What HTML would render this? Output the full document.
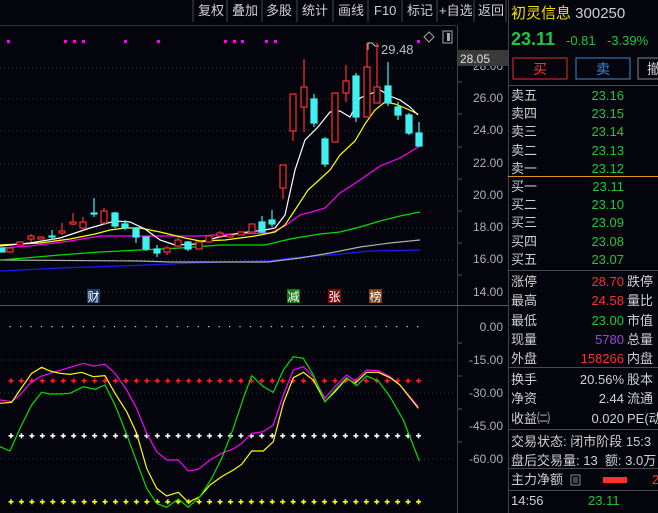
<!DOCTYPE html>
<html><head><meta charset="utf-8"><style>
*{margin:0;padding:0;box-sizing:border-box}
body{width:658px;height:513px;background:#04040c;overflow:hidden;position:relative;font-family:"Liberation Sans","Noto Sans CJK SC",sans-serif;color:#c8c8c8}
.t{position:absolute;font-size:13px;line-height:16px;white-space:nowrap}
.g{color:#1ec83c}.r{color:#ff3030}.y{color:#f0e000}.w{color:#d0d0d0}
.rt{text-align:right}
.hl{position:absolute;left:508px;width:150px;height:1px;background:#4a4a4a}
</style></head><body>
<svg width="658" height="513" style="position:absolute;left:0;top:0">
<defs>
<pattern id="pr" x="7.5" y="0" width="10.45" height="513" patternUnits="userSpaceOnUse"><rect x="1" y="380" width="5" height="1.6" fill="#ff2020"/><rect x="2.7" y="378.3" width="1.6" height="5" fill="#ff2020"/></pattern>
<pattern id="pw" x="7.5" y="0" width="10.45" height="513" patternUnits="userSpaceOnUse"><rect x="1" y="435" width="5" height="1.6" fill="#ffffff"/><rect x="2.7" y="433.3" width="1.6" height="5" fill="#ffffff"/></pattern>
<pattern id="py" x="7.5" y="0" width="10.45" height="513" patternUnits="userSpaceOnUse"><rect x="1" y="501" width="5" height="1.6" fill="#ffff00"/><rect x="2.7" y="499.3" width="1.6" height="5" fill="#ffff00"/></pattern>
<pattern id="pd" x="9.5" y="0" width="10.45" height="513" patternUnits="userSpaceOnUse"><rect x="0" y="326" width="1.2" height="1.2" fill="#e0e0e0"/></pattern>
</defs>
<!-- toolbar -->
<g stroke="#4a4a4a"><line x1="193" y1="0" x2="193" y2="22"/><line x1="227" y1="0" x2="227" y2="22"/><line x1="262" y1="0" x2="262" y2="22"/><line x1="297" y1="0" x2="297" y2="22"/><line x1="333" y1="0" x2="333" y2="22"/><line x1="368" y1="0" x2="368" y2="22"/><line x1="402" y1="0" x2="402" y2="22"/><line x1="437" y1="0" x2="437" y2="22"/><line x1="474" y1="0" x2="474" y2="22"/><line x1="506" y1="0" x2="506" y2="22"/></g>
<line x1="0" y1="25.5" x2="457" y2="25.5" stroke="#333"/>
<g font-size="13" fill="#d0d0d0" font-family="Liberation Sans,Noto Sans CJK SC,sans-serif">
<text x="198" y="15">复权</text><text x="232" y="15">叠加</text><text x="266" y="15">多股</text><text x="302" y="15">统计</text><text x="338" y="15">画线</text><text x="374" y="15">F10</text><text x="407" y="15">标记</text><text x="439" y="15">+自选</text><text x="478" y="15">返回</text>
</g>
<line x1="457.5" y1="26" x2="457.5" y2="513" stroke="#444"/>
<line x1="508.5" y1="0" x2="508.5" y2="513" stroke="#444"/>
<line x1="0" y1="305.5" x2="508" y2="305.5" stroke="#555"/>
<g stroke="#3a3a3a" stroke-dasharray="1,3">
<line x1="0" y1="68" x2="455" y2="68"/><line x1="0" y1="99" x2="455" y2="99"/><line x1="0" y1="131" x2="455" y2="131"/><line x1="0" y1="164" x2="455" y2="164"/><line x1="0" y1="196" x2="455" y2="196"/><line x1="0" y1="228" x2="455" y2="228"/><line x1="0" y1="260" x2="455" y2="260"/><line x1="0" y1="292" x2="455" y2="292"/>
<line x1="0" y1="360" x2="455" y2="360"/><line x1="0" y1="393" x2="455" y2="393"/><line x1="0" y1="459" x2="455" y2="459"/>
</g>
<g stroke="#555"><line x1="458" y1="82" x2="462" y2="82"/><line x1="458" y1="114" x2="462" y2="114"/><line x1="458" y1="147" x2="462" y2="147"/><line x1="458" y1="179" x2="462" y2="179"/><line x1="458" y1="211" x2="462" y2="211"/><line x1="458" y1="243" x2="462" y2="243"/><line x1="458" y1="275" x2="462" y2="275"/><line x1="458" y1="343" x2="462" y2="343"/><line x1="458" y1="376" x2="462" y2="376"/><line x1="458" y1="409" x2="462" y2="409"/><line x1="458" y1="442" x2="462" y2="442"/></g>
<g font-size="12" fill="#b0b0b0" text-anchor="end" font-family="Liberation Sans,sans-serif">
<text x="503" y="70">28.00</text>
<text x="503" y="102">26.00</text><text x="503" y="134">24.00</text><text x="503" y="167">22.00</text><text x="503" y="199">20.00</text><text x="503" y="231">18.00</text><text x="503" y="263">16.00</text><text x="503" y="296">14.00</text>
<text x="503" y="331">0.00</text><text x="503" y="364">-15.00</text><text x="503" y="397">-30.00</text><text x="503" y="430">-45.00</text><text x="503" y="463">-60.00</text>
</g>
<rect x="458" y="50" width="50" height="16" fill="#3a3a3a"/>
<text x="460" y="63" font-size="12" fill="#e0e0e0" font-family="Liberation Sans,sans-serif">28.05</text>
<rect x="443" y="31" width="9" height="12" fill="none" stroke="#aaa"/><rect x="447" y="33" width="3" height="8" fill="#aaa"/>
<path d="M424 37 L429 32 L434 37 L429 42Z" fill="none" stroke="#aaa"/>
<g fill="#ff00ff"><rect x="7" y="40" width="3" height="3"/><rect x="64" y="40" width="3" height="3"/><rect x="73" y="40" width="3" height="3"/><rect x="82" y="40" width="3" height="3"/><rect x="124" y="40" width="3" height="3"/><rect x="157" y="40" width="3" height="3"/><rect x="224" y="40" width="3" height="3"/><rect x="233" y="40" width="3" height="3"/><rect x="241" y="40" width="3" height="3"/><rect x="265" y="40" width="3" height="3"/><rect x="274" y="40" width="3" height="3"/><rect x="417" y="40" width="3" height="3"/></g>
<path d="M368 50 V43 h4 l3 3 h4" fill="none" stroke="#ccc"/>
<text x="381" y="54" font-size="13" fill="#c0c0c0" font-family="Liberation Sans,sans-serif">29.48</text>
<g fill="none" stroke-width="1.2">
<polyline stroke="#1a1aff" points="0,271 60,268 120,266 170,264 220,262 268,261 290,258 330,255 370,251 420,250"/>
<polyline stroke="#b0b0b0" points="0,260 140,261 170,262 240,262 268,262 300,258 330,253 360,247 390,243 420,240"/>
<polyline stroke="#00e000" points="0,260 25,258 60,255 100,252 140,250 180,248 220,245 265,245 290,239 320,234 340,232 360,227 380,221 400,216 420,212"/>
<polyline stroke="#ff00ff" points="0,248 30,246 70,241 100,236 160,236 200,236 230,234 270,233 285,226 300,215 315,211 325,208 340,193 360,180 380,166 400,158 420,146"/>
<polyline stroke="#ffff00" points="0,245 40,243 70,239 95,234 110,230 125,228 140,228 160,232 185,238 200,241 225,240 255,236 275,232 285,225 295,210 308,190 318,181 330,170 340,155 355,141 365,124 375,110 385,102 395,104 405,108 418,114"/>
<polyline stroke="#ffffff" points="0,246 30,243 60,238 90,228 115,221 130,222 145,229 160,240 175,245 195,244 215,238 240,233 265,230 275,228 285,215 295,170 305,140 318,127 330,112 340,111 350,117 360,98 380,90 390,96 400,100 410,107 418,115"/>
</g>
<g stroke-width="1.2">
<g stroke="#ff3030" fill="#04040c">
<line x1="31" y1="234" x2="31" y2="242"/><line x1="62" y1="223" x2="62" y2="235"/><line x1="73" y1="213" x2="73" y2="225"/><line x1="83" y1="217" x2="83" y2="230"/><line x1="104" y1="208" x2="104" y2="225"/><line x1="167" y1="246" x2="167" y2="255"/><line x1="178" y1="237" x2="178" y2="247"/><line x1="220" y1="231" x2="220" y2="238"/><line x1="283" y1="165" x2="283" y2="199"/><line x1="293" y1="94" x2="293" y2="141"/><line x1="304" y1="59" x2="304" y2="132"/><line x1="346" y1="65" x2="346" y2="102"/><line x1="367" y1="43" x2="367" y2="117"/><line x1="377" y1="43" x2="377" y2="103"/>
<rect x="7" y="248" width="6" height="4"/><rect x="17" y="242" width="6" height="3"/><rect x="28" y="236" width="6" height="3"/><rect x="38" y="237" width="6" height="2"/><rect x="59" y="231" width="6" height="2"/><rect x="70" y="222" width="6" height="2"/><rect x="80" y="222" width="6" height="6"/><rect x="101" y="211" width="6" height="12"/><rect x="164" y="248" width="6" height="4"/><rect x="175" y="240" width="6" height="6"/><rect x="196" y="242" width="6" height="7"/><rect x="206" y="236" width="6" height="6"/><rect x="217" y="233" width="6" height="3"/><rect x="227" y="235" width="6" height="2"/><rect x="238" y="232" width="6" height="3"/><rect x="249" y="224" width="6" height="8"/><rect x="280" y="165" width="6" height="23"/><rect x="290" y="94" width="6" height="37"/><rect x="301" y="87" width="6" height="20"/><rect x="332" y="93" width="6" height="49"/><rect x="343" y="81" width="6" height="12"/><rect x="364" y="67" width="6" height="50"/><rect x="374" y="87" width="6" height="16"/>
</g>
<g stroke="#40f0f0" fill="#40f0f0">
<line x1="52" y1="230" x2="52" y2="240"/><line x1="94" y1="198" x2="94" y2="217"/><line x1="115" y1="212" x2="115" y2="228"/><line x1="125" y1="220" x2="125" y2="230"/><line x1="136" y1="227" x2="136" y2="243"/><line x1="146" y1="237" x2="146" y2="251"/><line x1="157" y1="245" x2="157" y2="257"/><line x1="188" y1="241" x2="188" y2="251"/><line x1="262" y1="216" x2="262" y2="233"/><line x1="272" y1="210" x2="272" y2="227"/><line x1="314" y1="94" x2="314" y2="127"/><line x1="325" y1="137" x2="325" y2="167"/><line x1="356" y1="73" x2="356" y2="122"/><line x1="388" y1="62" x2="388" y2="106"/><line x1="398" y1="102" x2="398" y2="120"/><line x1="409" y1="113" x2="409" y2="135"/><line x1="419" y1="122" x2="419" y2="146"/>
<rect x="0" y="248" width="5" height="4"/><rect x="49" y="236" width="6" height="1"/><rect x="91" y="213" width="6" height="1"/><rect x="112" y="213" width="6" height="13"/><rect x="122" y="224" width="6" height="4"/><rect x="133" y="228" width="6" height="9"/><rect x="143" y="237" width="6" height="12"/><rect x="154" y="249" width="6" height="4"/><rect x="185" y="242" width="6" height="7"/><rect x="259" y="222" width="6" height="10"/><rect x="269" y="220" width="6" height="4"/><rect x="311" y="99" width="6" height="24"/><rect x="322" y="139" width="6" height="25"/><rect x="353" y="76" width="6" height="41"/><rect x="385" y="86" width="6" height="17"/><rect x="395" y="107" width="6" height="8"/><rect x="406" y="115" width="6" height="18"/><rect x="416" y="133" width="6" height="13"/>
</g></g>
<rect x="87" y="289" width="13" height="14" fill="#1c3a6a"/><text x="87.5" y="301" font-size="12" fill="#fff" font-family="Noto Sans CJK SC,sans-serif">财</text>
<rect x="287" y="289" width="13" height="14" fill="#157a15"/><text x="287.5" y="301" font-size="12" fill="#fff" font-family="Noto Sans CJK SC,sans-serif">减</text>
<rect x="328" y="289" width="13" height="14" fill="#7a0c0c"/><text x="328.5" y="301" font-size="12" fill="#fff" font-family="Noto Sans CJK SC,sans-serif">张</text>
<rect x="369" y="289" width="13" height="14" fill="#7a4410"/><text x="369.5" y="301" font-size="12" fill="#fff" font-family="Noto Sans CJK SC,sans-serif">榜</text>
<rect x="7" y="320" width="418" height="190" fill="url(#pd)"/>
<rect x="7" y="370" width="418" height="20" fill="url(#pr)"/>
<rect x="7" y="425" width="418" height="20" fill="url(#pw)"/>
<rect x="7" y="492" width="418" height="18" fill="url(#py)"/>
<g transform="translate(0,305) scale(0.33333)" fill="none" stroke-width="3.6">
<polyline stroke="#ff00ff" points="0,285 35,290 60,270 90,235 120,215 150,205 200,190 250,175 280,183 315,178 345,205 380,255 410,310 440,385 470,440 500,465 535,465 565,498 595,493 630,465 665,445 700,432 725,415 755,385 790,380 820,360 850,270 880,195 910,185 940,215 975,280 1005,245 1040,210 1065,228 1100,195 1135,197 1170,215 1200,240 1255,305"/>
<polyline stroke="#ffff00" points="0,295 35,292 60,255 95,205 125,187 150,198 180,205 210,208 245,202 280,215 315,212 345,265 380,320 410,385 440,490 470,550 500,573 535,562 565,592 600,575 630,540 665,515 700,495 725,478 755,438 790,438 820,410 850,295 880,218 910,202 940,225 975,290 1005,260 1040,220 1065,235 1100,202 1135,202 1170,218 1200,240 1255,310"/>
<polyline stroke="#00e000" points="0,425 30,438 60,370 95,300 125,262 150,267 180,267 210,265 250,245 285,253 315,240 345,300 375,375 410,470 440,550 470,595 500,607 535,582 565,607 600,575 635,520 665,460 700,370 730,280 755,212 790,245 820,262 850,195 880,155 910,160 940,210 975,290 1005,255 1040,218 1070,242 1100,213 1135,228 1170,275 1210,345 1258,468"/>
</g>
<rect x="513" y="58" width="54" height="21" fill="none" stroke="#e03030"/>
<rect x="576" y="58" width="54" height="21" fill="none" stroke="#3a8ad8"/>
<rect x="638" y="58" width="30" height="21" fill="none" stroke="#888"/>
<text x="533" y="74" font-size="14" fill="#ff3030" font-family="Noto Sans CJK SC,sans-serif">买</text>
<text x="596" y="74" font-size="14" fill="#3a8ad8" font-family="Noto Sans CJK SC,sans-serif">卖</text>
<text x="647" y="74" font-size="14" fill="#ccc" font-family="Noto Sans CJK SC,sans-serif">撤</text>
<line x1="508" y1="176.5" x2="658" y2="176.5" stroke="#e09020"/>
<rect x="603" y="477" width="24" height="6" fill="#ff3030"/>
<rect x="571" y="475" width="9" height="10" fill="none" stroke="#888"/>
<g stroke="#888"><line x1="573" y1="478" x2="578" y2="478"/><line x1="573" y1="480" x2="578" y2="480"/><line x1="573" y1="482" x2="578" y2="482"/></g>
</svg>
<div class="hl" style="top:85px"></div>
<div class="hl" style="top:270px"></div>
<div class="hl" style="top:367px"></div>
<div class="hl" style="top:429px"></div>
<div class="hl" style="top:468px"></div>
<div class="hl" style="top:490px"></div>
<div class="t y" style="left:511px;top:5px;font-size:15px;line-height:18px">初灵信息 <span class="w">300250</span></div>
<div class="t g" style="left:511px;top:29px;font-size:18px;line-height:20px;font-weight:bold">23.11</div>
<div class="t g" style="left:566px;top:33px">-0.81</div>
<div class="t g" style="left:607px;top:33px">-3.39%</div>
<div class="t w" style="left:511px;top:87px;line-height:18.2px">卖五<br>卖四<br>卖三<br>卖二<br>卖一</div>
<div class="t g rt" style="left:570px;width:54px;top:87px;line-height:18.2px">23.16<br>23.15<br>23.14<br>23.13<br>23.12</div>
<div class="t w" style="left:511px;top:178px;line-height:18.2px">买一<br>买二<br>买三<br>买四<br>买五</div>
<div class="t g rt" style="left:570px;width:54px;top:178px;line-height:18.2px">23.11<br>23.10<br>23.09<br>23.08<br>23.07</div>
<div class="t w" style="left:511px;top:272px;line-height:19.3px">涨停<br>最高<br>最低<br>现量<br>外盘</div>
<div class="t rt" style="left:560px;width:64px;top:272px;line-height:19.3px"><span class="r">28.70</span><br><span class="r">24.58</span><br><span class="g">23.00</span><br><span style="color:#a040e0">5780</span><br><span class="r">158266</span></div>
<div class="t w" style="left:627px;top:272px;line-height:19.3px">跌停<br>量比<br>市值<br>总量<br>内盘</div>
<div class="t w" style="left:511px;top:370px;line-height:19.3px">换手<br>净资<br>收益㈡</div>
<div class="t w rt" style="left:560px;width:64px;top:370px;line-height:19.3px">20.56%<br>2.44<br>0.020</div>
<div class="t w" style="left:627px;top:370px;line-height:19.3px">股本<br>流通<br>PE(动</div>
<div class="t w" style="left:511px;top:432px;line-height:19px">交易状态: 闭市阶段 15:3<br>盘后交易量: 13 &nbsp;额: 3.0万</div>
<div class="t w" style="left:511px;top:472px">主力净额</div>
<div class="t r" style="left:652px;top:472px">2</div>
<div class="t w" style="left:511px;top:493px">14:56</div>
<div class="t g" style="left:588px;top:493px">23.11</div>
</body></html>
